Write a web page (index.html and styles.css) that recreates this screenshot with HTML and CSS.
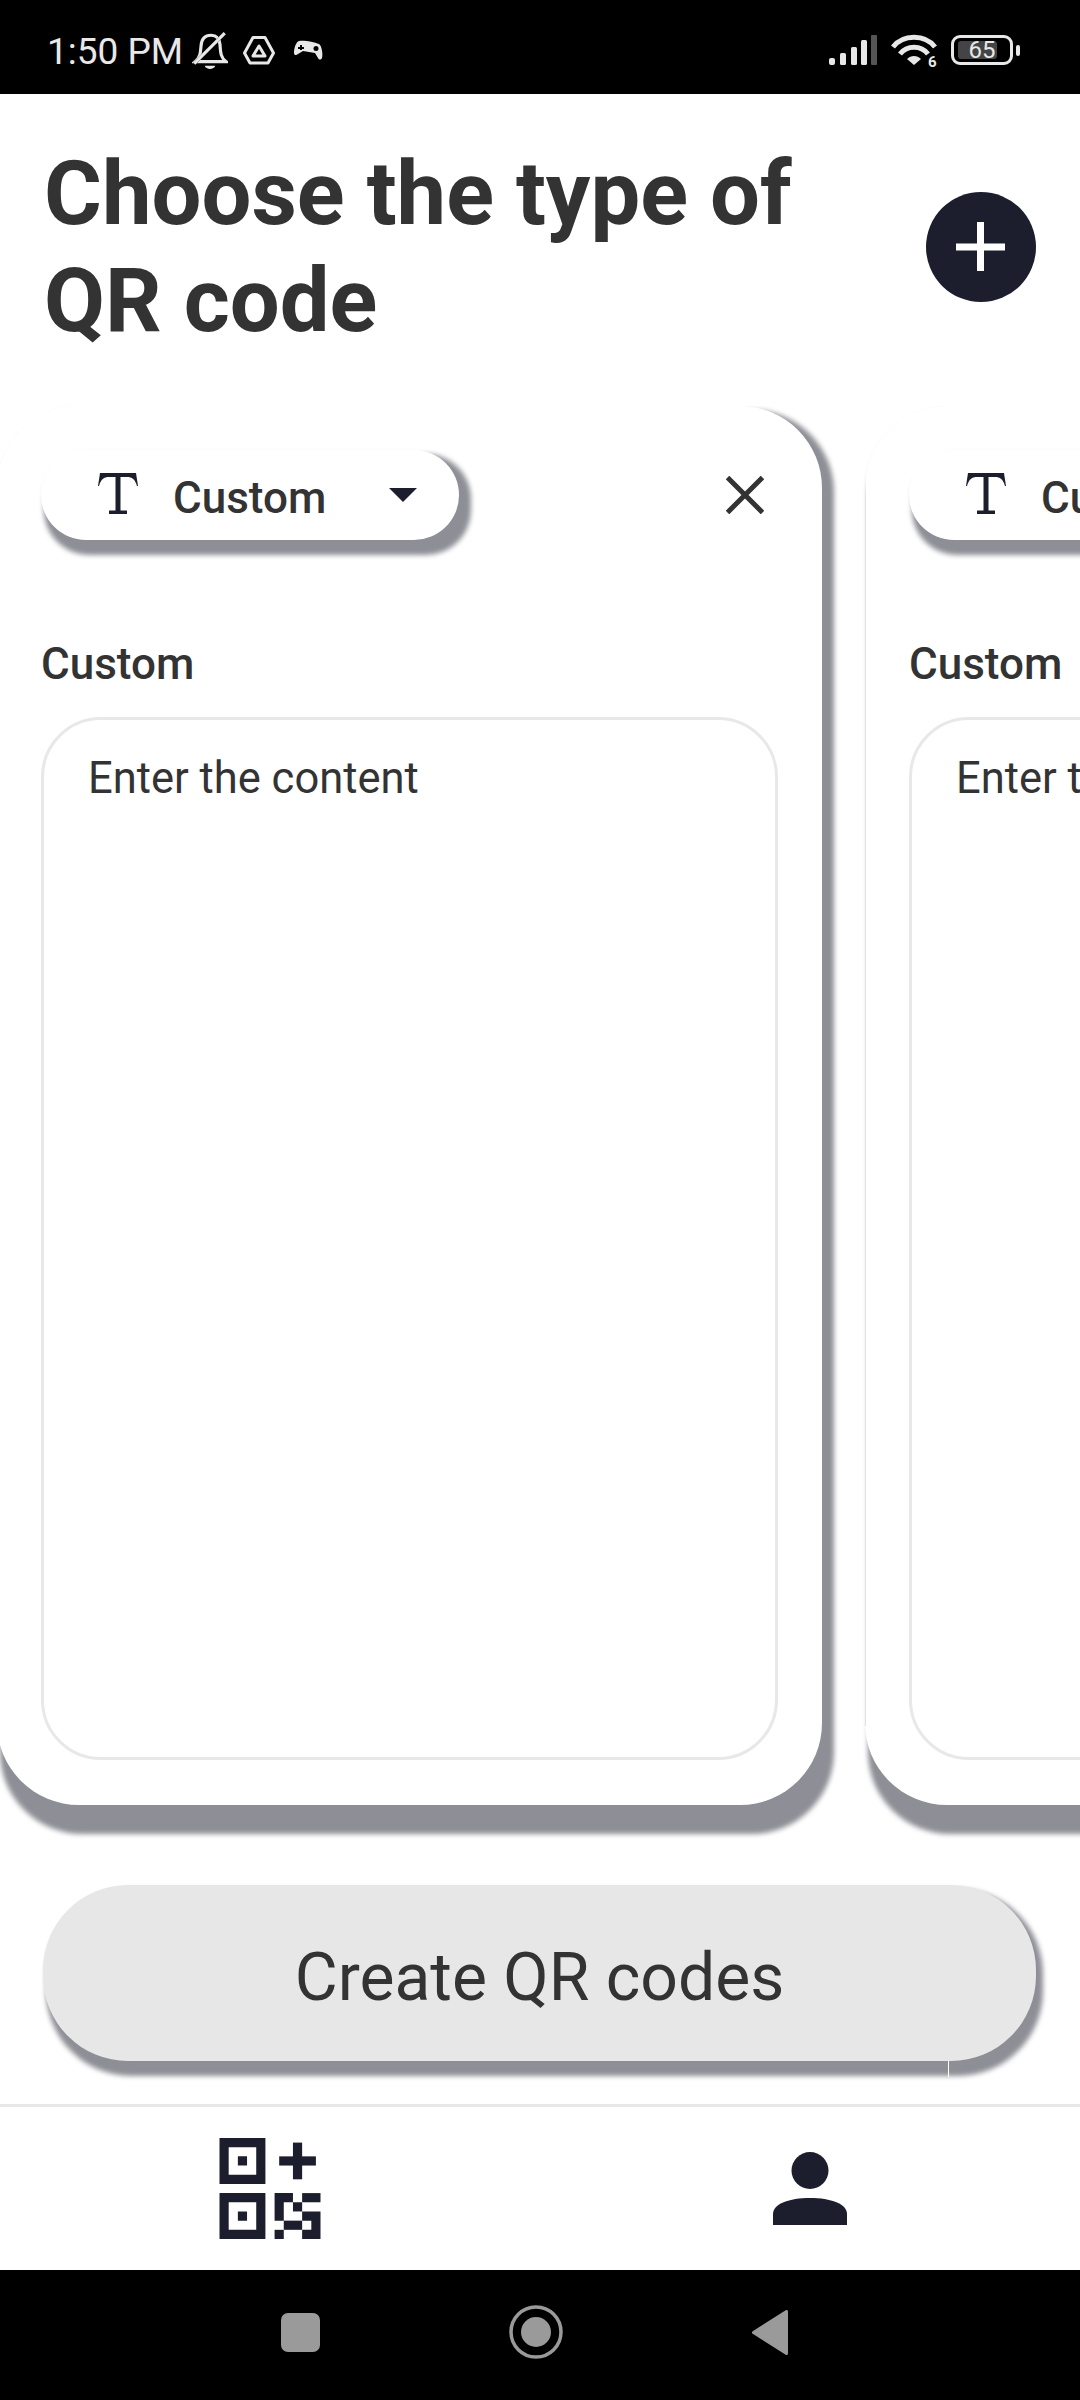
FILE: index.html
```html
<!DOCTYPE html>
<html lang="en">
<head>
  <meta charset="UTF-8" />
  <title>Choose the type of QR code</title>
  <link rel="stylesheet" href="styles.css">
</head>
<body>
  <div class="statusbar">
    <div class="status-left">
      <span class="clock">1:50 PM</span>
      <svg class="icon-bell" width="36" height="39" viewBox="0 0 34 37" fill="none" stroke="#e8e8e8" stroke-width="3">
        <path d="M3 29 C8 25 8 20 8.500 14 C9 7 13 4 18 4 C23 4 26 7 26.500 13 C27 20 27 25 32 29 Z" />
        <path d="M2 31 L31 2" stroke-width="3.200" stroke="#000" />
        <path d="M2 31 L31 2" />
        <path d="M12 33 H22 C21 37 13 37 12 33 Z" fill="#e8e8e8" stroke="none" />
      </svg>
      <svg class="icon-hex" width="32" height="29" viewBox="0 0 32 29" fill="none" stroke="#e8e8e8" stroke-width="3" stroke-linejoin="round">
        <path d="M10 1.500 H22 L30.500 17 L25 27 H7 L1.500 17 Z" />
        <path d="M16 10 L22 20 H10 Z" />
      </svg>
      <svg class="icon-pad" width="29" height="20" viewBox="0 0 29 20">
        <path fill="#e8e8e8" d="M5 1 C10 0 20 2 25 4 C28 6 29 15 28 18 C27 20 25 20 24 18 L21 13 L9 11 L4 14 C2 16 0 15 0 13 C0 8 2 2 5 1 Z" />
        <circle cx="22" cy="8.500" r="2.500" fill="#000" />
        <path d="M6 5 H8 V7 H10 V9 H8 V10 H6 V9 H4 V7 H6 Z" fill="#000" />
      </svg>
    </div>
    <div class="status-right">
      <svg width="48" height="30" viewBox="0 0 48 30" fill="#e8e8e8">
        <rect x="0" y="23" width="6" height="7" rx="2" />
        <rect x="11" y="18" width="6" height="12" rx="1.500" />
        <rect x="22" y="12" width="6" height="18" rx="1.500" />
        <rect x="32" y="5" width="6" height="25" rx="1.500" />
        <rect x="42" y="0" width="6" height="30" rx="1" fill="#555" />
      </svg>
      <svg width="46" height="35" viewBox="0 0 46 35" fill="none" stroke="#e8e8e8" stroke-width="5">
        <path d="M2 14 C12 1 34 1 44 14" />
        <path d="M9 21 C16 12 30 12 37 21" />
        <path d="M23 32 L16 26 C20 22 26 22 30 26 Z" fill="#e8e8e8" stroke="none" />
        <text x="37" y="34" class="wifi-six" fill="#e8e8e8" stroke="none">6</text>
      </svg>
      <div class="battery">
        <div class="battery-body">
          <div class="battery-level"></div>
          <span class="battery-text">65</span>
        </div>
        <div class="battery-nub"></div>
      </div>
    </div>
  </div>

  <div class="header">
    <h1>Choose the type of<br>QR code</h1>
    <button class="add-button">
      <svg width="50" height="50" viewBox="0 0 50 50" fill="#fff">
        <rect x="0" y="21.500" width="49" height="7" />
        <rect x="21" y="0" width="7" height="49" />
      </svg>
    </button>
  </div>

  <div class="carousel">
    <div class="card raised">
      <div class="card-top">
        <div class="type-pill raised">
          <svg class="icon-t" width="42" height="41" viewBox="0 0 42 41" fill="#1c1e2e">
            <path d="M1 13 L3 0 H39 L41 13 H40 C38 6 35 4 30 4 H23.500 V37.500 H30 V41 H12 V37.500 H18.500 V4 H12 C7 4 4 6 2 13 Z" />
          </svg>
          <span class="type-name">Custom</span>
          <span class="type-arrow"></span>
        </div>
        <svg class="icon-close" width="38" height="38" viewBox="0 0 38 38" stroke="#333" stroke-width="5">
          <path d="M1.500 1.500 L36.500 36.500 M36.500 1.500 L1.500 36.500" />
        </svg>
      </div>
      <div class="field-label">Custom</div>
      <div class="field-input">Enter the content</div>
    </div>

    <div class="card raised">
      <div class="card-top">
        <div class="type-pill raised">
          <svg class="icon-t" width="42" height="41" viewBox="0 0 42 41" fill="#1c1e2e">
            <path d="M1 13 L3 0 H39 L41 13 H40 C38 6 35 4 30 4 H23.500 V37.500 H30 V41 H12 V37.500 H18.500 V4 H12 C7 4 4 6 2 13 Z" />
          </svg>
          <span class="type-name">Custom</span>
          <span class="type-arrow"></span>
        </div>
      </div>
      <div class="field-label">Custom</div>
      <div class="field-input">Enter the content</div>
    </div>
  </div>

  <button class="create-button raised">
    Create QR codes
    <span class="create-seam"></span>
  </button>

  <div class="tabbar">
    <div class="tab">
      <svg width="102" height="101" viewBox="0 0 11 11" fill="#1c1e2e">
        <path fill-rule="evenodd" d="M0 0 H5 V5 H0 Z M1 1 V4 H4 V1 Z M2 2 H3 V3 H2 Z" />
        <path fill-rule="evenodd" d="M0 6 H5 V11 H0 Z M1 7 V10 H4 V7 Z M2 8 H3 V9 H2 Z" />
        <rect x="6.500" y="2" width="4" height="1" />
        <rect x="8" y="0.500" width="1" height="4" />
        <path d="M6 6 H8 V7 H7 V9 H6 Z" />
        <path d="M9 6 H11 V7 H9 Z" />
        <rect x="8" y="7" width="1" height="1" />
        <path d="M9 8 H11 V11 H9 V10 H10 V9 H9 Z" />
        <rect x="7" y="9" width="2" height="1" />
        <rect x="6" y="10" width="1" height="1" />
      </svg>
    </div>
    <div class="tab">
      <svg width="74" height="73" viewBox="0 0 74 73" fill="#1c1e2e">
        <circle cx="37" cy="18.500" r="18.500" />
        <path d="M0 73 V62 C0 52 16 46 37 46 C58 46 74 52 74 62 V73 Z" />
      </svg>
    </div>
  </div>

  <div class="sysnav">
    <span class="sys-square"></span>
    <svg width="54" height="54" viewBox="0 0 54 54" fill="#9a9a9a">
      <circle cx="27" cy="27" r="25" fill="none" stroke="#9a9a9a" stroke-width="3.500" />
      <circle cx="27" cy="27" r="15" />
    </svg>
    <svg width="36" height="45" viewBox="0 0 36 45" fill="#9a9a9a" stroke="#9a9a9a" stroke-width="3" stroke-linejoin="round">
      <path d="M34.500 1.500 V43.500 L1.500 22.500 Z" />
    </svg>
  </div>
</body>
</html>
```

FILE: styles.css
```css
* {
  box-sizing: border-box;
}
html, body {
  margin: 0;
  padding: 0;
}
body {
  width: 1080px;
  height: 2400px;
  overflow: hidden;
  background: #fff;
  color: #333;
  font-family: Roboto, "Liberation Sans", sans-serif;
  display: flex;
  flex-direction: column;
}
button {
  border: none;
  padding: 0;
  font-family: inherit;
  color: inherit;
}

/* status bar */
.statusbar {
  height: 94px;
  flex: none;
  background: #000;
  color: #e8e8e8;
  display: flex;
  justify-content: space-between;
  align-items: center;
  padding: 6px 60px 0 47px;
}
.status-left, .status-right {
  display: flex;
  align-items: center;
}
.clock {
  font-size: 37px;
  width: 145px;
  padding-top: 2px;
}
.icon-hex {
  margin-left: 15px;
}
.icon-pad {
  margin-left: 19px;
}
.status-right {
  gap: 14px;
}
.wifi-six {
  font-family: Roboto, sans-serif;
  font-size: 15px;
  font-weight: 700;
}
.battery {
  display: flex;
  align-items: center;
  gap: 3px;
}
.battery-body {
  position: relative;
  width: 62px;
  height: 30px;
  border: 3px solid #e8e8e8;
  border-radius: 9px;
  display: flex;
  align-items: center;
  justify-content: center;
}
.battery-level {
  position: absolute;
  left: 4px;
  top: 3px;
  bottom: 3px;
  width: 39px;
  border-radius: 3px;
  background: #444;
}
.battery-text {
  position: relative;
  font-size: 24px;
}
.battery-nub {
  width: 4px;
  height: 11px;
  border-radius: 2px;
  background: #e8e8e8;
}

/* title */
.header {
  flex: none;
  height: 312px;
  display: flex;
  justify-content: space-between;
  align-items: flex-start;
  padding: 47px 44px 0 44px;
}
h1 {
  margin: 0;
  font-size: 88.5px;
  line-height: 107px;
  font-weight: 700;
  color: #333;
  white-space: nowrap;
}
.add-button {
  width: 110px;
  height: 110px;
  margin-top: 51px;
  border-radius: 50%;
  background: #1c1e2e;
  display: flex;
  align-items: center;
  justify-content: center;
}

/* flat shadow that only grows to the right and down */
.raised {
  position: relative;
  z-index: 0;
}
.raised::before {
  content: "";
  position: absolute;
  top: 4px;
  left: 3px;
  right: calc(var(--lift-x) * -1);
  bottom: calc(var(--lift-y) * -1);
  border-radius: inherit;
  background: #8e8f96;
  filter: blur(2.5px);
  z-index: -2;
}
.raised::after {
  content: "";
  position: absolute;
  inset: 0;
  border-radius: inherit;
  background: var(--face);
  z-index: -1;
}

/* cards */
.carousel {
  flex: none;
  display: flex;
  gap: 43px;
  margin-left: -3px;
  padding-bottom: 80px;
  width: 1083px;
  overflow: hidden;
}
.card {
  --lift-x: 12px;
  --lift-y: 29px;
  --face: #fff;
  flex: 0 0 825px;
  height: 1399px;
  border-radius: 82px;
  padding: 44px 44px 45px 44px;
}
/* thin edge line, only on the straight part of the left side */
.card::after {
  background-image: linear-gradient(to bottom, transparent 70px, #e2e2e2 90px, #e2e2e2 1320px, transparent 1320px);
  background-size: 1px 100%;
  background-repeat: no-repeat;
}
.card-top {
  height: 90px;
  display: flex;
  justify-content: space-between;
  align-items: center;
}
.icon-close {
  margin-right: 14px;
}
.type-pill {
  --lift-x: 12px;
  --lift-y: 15px;
  --face: #fff;
  width: 418px;
  height: 90px;
  border-radius: 45px;
  display: flex;
  align-items: center;
  padding-left: 56px;
}
.icon-t {
  flex: none;
  margin-top: -4px;
}
.type-name {
  margin-left: 34px;
  margin-top: 5px;
  font-size: 44px;
  font-weight: 500;
}
.type-arrow {
  margin-left: 63px;
  border-left: 14px solid transparent;
  border-right: 14px solid transparent;
  border-top: 14px solid #1c1e2e;
}
.field-label {
  margin-top: 99px;
  font-size: 44px;
  line-height: 50px;
  font-weight: 500;
}
.field-input {
  margin-top: 28px;
  width: 737px;
  height: 1043px;
  border: 3px solid #e8e8e8;
  border-radius: 60px;
  padding: 34px 44px;
  font-size: 43.5px;
  line-height: 50px;
  white-space: nowrap;
  overflow: hidden;
}

/* main button */
.create-button {
  --lift-x: 7px;
  --lift-y: 15px;
  --face: #e7e7e7;
  flex: none;
  display: block;
  background: none;
  width: 993px;
  height: 176px;
  margin-left: 43px;
  padding-top: 9px;
  border-radius: 85px;
  font-size: 66px;
  text-align: center;
}
.create-seam {
  position: absolute;
  left: 905px;
  top: 176px;
  width: 1px;
  height: 16px;
  background: #fff;
}

/* bottom tabs */
.tabbar {
  flex: none;
  margin-top: 43px;
  height: 166px;
  border-top: 3px solid #e8e8e8;
  display: flex;
}
.tab {
  flex: 1;
  display: flex;
  align-items: center;
  justify-content: center;
}

/* android nav */
.sysnav {
  flex: 1;
  background: #000;
  display: flex;
  align-items: center;
  gap: 189px;
  padding: 0 0 6px 281px;
}
.sys-square {
  width: 39px;
  height: 39px;
  border-radius: 7px;
  background: #9a9a9a;
}
```
